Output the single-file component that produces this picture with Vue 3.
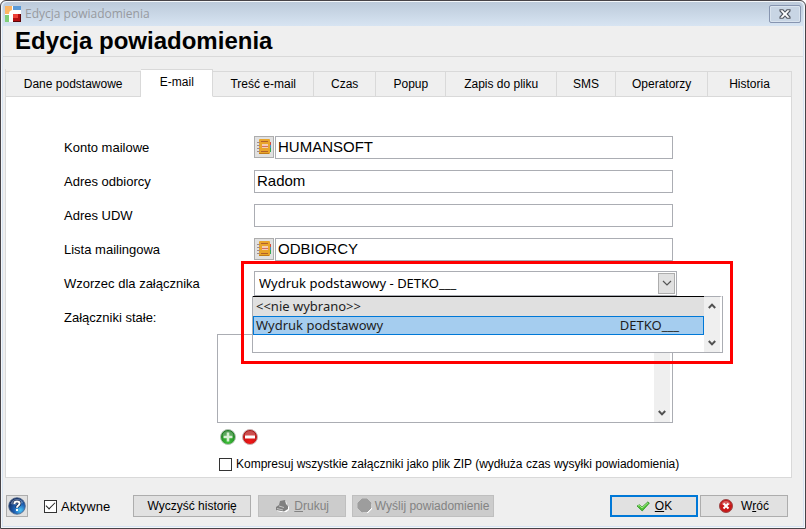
<script setup>
import { ref } from "vue";

const tabs = [
  { name: "Dane podstawowe", size: 136 },
  { name: "E-mail", size: 72 },
  { name: "Treść e-mail", size: 101 },
  { name: "Czas", size: 62 },
  { name: "Popup", size: 70 },
  { name: "Zapis do pliku", size: 111 },
  { name: "SMS", size: 59 },
  { name: "Operatorzy", size: 92 },
  { name: "Historia", size: 84 },
];
const activeTab = ref("E-mail");

const account = ref("HUMANSOFT");
const recipient = ref("Radom");
const bcc = ref("");
const mailingList = ref("ODBIORCY");

const templates = [
  { name: "<<nie wybrano>>", code: "" },
  { name: "Wydruk podstawowy", code: "DETKO___" },
];
const template = ref("Wydruk podstawowy");
const attachments = ref("");
const zip = ref(false);
const active = ref(true);

const optionText = (item) => (item.code ? `${item.name} - ${item.code}` : item.name);
</script>

<template>
  <div class="window">
    <div class="titlebar">
      <svg class="logo" width="16" height="16" viewBox="0 0 16 16">
        <rect width="16" height="16" fill="#fff" />
        <rect width="7" height="8" fill="#fdb562" />
        <rect x="8" width="8" height="4" fill="#5b9bd8" />
        <rect y="9" width="7" height="7" fill="#7fcf78" />
        <path d="M4 16V8Q4 4 8 4H16V16Z" fill="#fff" />
        <rect x="8" y="8" width="8" height="8" fill="#b30f12" />
        <rect x="8" y="8" width="5" height="4" fill="#ee4038" />
        <path d="M15 8H16V16H8V15H15Z" fill="#5c0508" />
      </svg>
      <span class="caption">Edycja powiadomienia</span>
      <button class="close" aria-label="Zamknij">
        <svg width="12" height="10" viewBox="0 0 12 10">
          <path d="M1 .8H4L6 3L8 .8H11V2L8.2 5L11 8V9.2H8L6 7L4 9.2H1V8L3.8 5L1 2Z" fill="#fff" stroke="#50545e" stroke-width="1.1" />
        </svg>
      </button>
    </div>

    <div class="body">
      <h1 class="heading">Edycja powiadomienia</h1>

      <div class="tabs" role="tablist">
        <button
          v-for="tab in tabs"
          :key="tab.name"
          class="tab"
          :class="{ active: tab.name === activeTab }"
          :style="{ flexGrow: tab.size }"
          role="tab"
          @click="activeTab = tab.name"
        >
          {{ tab.name }}
        </button>
      </div>

      <div class="panel">
        <div class="form">
          <div class="row">
            <label for="account">Konto mailowe</label>
            <div class="field">
              <button class="book" aria-label="Wybierz konto">
                <svg width="16" height="17" viewBox="0 0 16 17">
                  <path d="M13 4H15V7H13Z" fill="#d84b3a" />
                  <path d="M13 7H15V10H13Z" fill="#3f8fc4" />
                  <path d="M13 10H15V14H13Z" fill="#34a853" />
                  <rect x="3" y="1" width="11" height="15" rx="1" fill="#e9a52b" />
                  <path d="M3 15.5H13" stroke="#c17c17" />
                  <path d="M1 4.5H4M1 7.5H4M1 10.5H4M1 13.5H4" stroke="#a58c86" />
                  <path d="M5 3.5H12M5 13.5H12" stroke="#b2602a" />
                  <rect x="6" y="6" width="6" height="4" fill="#f5cdb4" />
                  <path d="M6 8.5H12" stroke="#d3705c" />
                </svg>
              </button>
              <input id="account" v-model="account" type="text" class="text" />
            </div>
          </div>
          <div class="row">
            <label for="recipient">Adres odbiorcy</label>
            <div class="field">
              <input id="recipient" v-model="recipient" type="text" class="text" />
            </div>
          </div>
          <div class="row">
            <label for="bcc">Adres UDW</label>
            <div class="field">
              <input id="bcc" v-model="bcc" type="text" class="text" />
            </div>
          </div>
          <div class="row">
            <label for="list">Lista mailingowa</label>
            <div class="field">
              <button class="book" aria-label="Wybierz listę">
                <svg width="16" height="17" viewBox="0 0 16 17">
                  <path d="M13 4H15V7H13Z" fill="#d84b3a" />
                  <path d="M13 7H15V10H13Z" fill="#3f8fc4" />
                  <path d="M13 10H15V14H13Z" fill="#34a853" />
                  <rect x="3" y="1" width="11" height="15" rx="1" fill="#e9a52b" />
                  <path d="M3 15.5H13" stroke="#c17c17" />
                  <path d="M1 4.5H4M1 7.5H4M1 10.5H4M1 13.5H4" stroke="#a58c86" />
                  <path d="M5 3.5H12M5 13.5H12" stroke="#b2602a" />
                  <rect x="6" y="6" width="6" height="4" fill="#f5cdb4" />
                  <path d="M6 8.5H12" stroke="#d3705c" />
                </svg>
              </button>
              <input id="list" v-model="mailingList" type="text" class="text" />
            </div>
          </div>
          <div class="row">
            <label for="template">Wzorzec dla załącznika</label>
            <div class="field combo">
              <select id="template" v-model="template" class="select">
                <option v-for="item in templates" :key="item.name" :value="item.name">
                  {{ optionText(item) }}
                </option>
              </select>
              <span class="arrow">
                <svg width="10" height="6" viewBox="0 0 10 6">
                  <path d="M1 1L5 5L9 1" fill="none" stroke="#555" stroke-width="1.2" />
                </svg>
              </span>
              <div class="popup">
                <ul class="options" role="listbox" aria-label="Wzorce">
                  <li
                    v-for="item in templates"
                    :key="item.name"
                    class="option"
                    :class="{ selected: item.name === template }"
                    role="option"
                    @click="template = item.name"
                  >
                    <span>{{ item.name }}</span>
                    <span v-if="item.code" class="code">{{ item.code }}</span>
                  </li>
                </ul>
                <div class="scroll">
                  <svg width="8" height="6" viewBox="0 0 8 6">
                    <path d="M.8 5L4 1.6L7.2 5" fill="none" stroke="#505050" stroke-width="2" />
                  </svg>
                  <svg width="8" height="6" viewBox="0 0 8 6">
                    <path d="M.8 1L4 4.4L7.2 1" fill="none" stroke="#505050" stroke-width="2" />
                  </svg>
                </div>
              </div>
              <div class="marker"></div>
            </div>
          </div>
          <div class="row">
            <label for="attachments">Załączniki stałe:</label>
          </div>
        </div>

        <div class="attachments">
          <div class="files">
            <textarea id="attachments" v-model="attachments"></textarea>
            <div class="scroll files-scroll">
              <svg width="8" height="6" viewBox="0 0 8 6">
                <path d="M.8 5L4 1.6L7.2 5" fill="none" stroke="#505050" stroke-width="2" />
              </svg>
              <svg width="8" height="6" viewBox="0 0 8 6">
                <path d="M.8 1L4 4.4L7.2 1" fill="none" stroke="#505050" stroke-width="2" />
              </svg>
            </div>
          </div>
          <div class="actions">
            <button class="round" aria-label="Dodaj">
              <svg width="16" height="16" viewBox="0 0 16 16">
                <defs>
                  <radialGradient id="green" cx=".5" cy=".8" r=".8">
                    <stop offset="0" stop-color="#3fc43a" />
                    <stop offset="1" stop-color="#17701c" />
                  </radialGradient>
                </defs>
                <circle cx="8" cy="8" r="7.5" fill="url(#green)" stroke="#b5c4b5" />
                <path d="M2.5 6.5Q3 2 8 2T13.5 6.5Q8 8 2.5 6.5Z" fill="#fff" opacity=".25" />
                <path d="M8 3.5V12.5M3.5 8H12.5" stroke="#d9efd5" stroke-width="2.6" />
              </svg>
            </button>
            <button class="round" aria-label="Usuń">
              <svg width="16" height="16" viewBox="0 0 16 16">
                <defs>
                  <radialGradient id="red" cx=".5" cy=".8" r=".8">
                    <stop offset="0" stop-color="#f41616" />
                    <stop offset="1" stop-color="#a31616" />
                  </radialGradient>
                </defs>
                <circle cx="8" cy="8" r="7.5" fill="url(#red)" stroke="#c9b4b4" />
                <path d="M2.5 6.5Q3 2 8 2T13.5 6.5Q8 8 2.5 6.5Z" fill="#fff" opacity=".25" />
                <path d="M3 8H13" stroke="#fff" stroke-width="3" />
              </svg>
            </button>
          </div>
          <label class="check zip">
            <input v-model="zip" type="checkbox" />
            <span>Kompresuj wszystkie załączniki jako plik ZIP (wydłuża czas wysyłki powiadomienia)</span>
          </label>
        </div>
      </div>

      <div class="footer">
        <button class="help" aria-label="Pomoc">
          <svg width="18" height="18" viewBox="0 0 18 18">
            <defs>
              <radialGradient id="blue" cx=".7" cy=".75" r=".8">
                <stop offset="0" stop-color="#4cc6f8" />
                <stop offset=".45" stop-color="#1f62b5" />
                <stop offset="1" stop-color="#0f2557" />
              </radialGradient>
            </defs>
            <circle cx="9" cy="9" r="8.3" fill="url(#blue)" stroke="#4d6488" stroke-width=".8" />
            <path d="M2.5 7Q4 2 9 2T15 6Q9 9 2.5 7Z" fill="#fff" opacity=".3" />
            <path d="M6.4 7Q6.4 4.6 9 4.6T11.6 6.6Q11.6 7.8 10.2 8.6Q9 9.2 9 10.8" fill="none" stroke="#12234a" stroke-width="3.4" />
            <path d="M6.4 7Q6.4 4.6 9 4.6T11.6 6.6Q11.6 7.8 10.2 8.6Q9 9.2 9 10.8" fill="none" stroke="#fff" stroke-width="2" />
            <rect x="8" y="12" width="2" height="2" fill="#fff" />
          </svg>
        </button>
        <label class="check">
          <input v-model="active" type="checkbox" />
          <span>Aktywne</span>
        </label>
        <button class="btn history">Wyczyść historię</button>
        <button class="btn print" disabled>
          <svg width="14" height="12" viewBox="0 0 14 12">
            <path d="M5 1L10 0L11 4L13 6V9L9 12L1 10V7L4 5Z" fill="#fff" transform="translate(1 1)" />
            <path d="M5 1L10 0L11 4L13 6V9L9 11.5L1 10V7L4 5Z" fill="#7f7f7f" />
            <path d="M4 6L9 7.5M2 8.5L8 10" stroke="#c4c4c4" />
          </svg>
          <span><u>D</u>rukuj</span>
        </button>
        <button class="btn send" disabled>
          <svg width="16" height="16" viewBox="0 0 16 16">
            <path d="M6 2H11L15 6V11L11 15H6L2 11Z" fill="#fff" />
            <path d="M5 1H10L14 5V10L10 14H5L1 10V5Z" fill="#9d9d9d" stroke="#9d9d9d" />
          </svg>
          <span>Wyślij powiadomienie</span>
        </button>
        <button class="btn main ok">
          <svg width="14" height="11" viewBox="0 0 14 11">
            <path d="M1 5L3.5 3.8L6 6.2L12 .8L13.3 2.2L6.2 10Z" fill="#4cc234" stroke="#2f8f2a" stroke-width=".8" />
            <path d="M2 5L3.5 4.5L6 7L12 1.8" fill="none" stroke="#a5eb86" />
          </svg>
          <span><u>O</u>K</span>
        </button>
        <button class="btn main">
          <svg width="14" height="14" viewBox="0 0 14 14">
            <circle cx="7" cy="7" r="6.5" fill="#c81818" stroke="#9b4a4a" />
            <path d="M2.5 5.5Q3 2 7 2T11.5 5.5Q7 7 2.5 5.5Z" fill="#fff" opacity=".3" />
            <path d="M4.5 4.5L9.5 9.5M9.5 4.5L4.5 9.5" stroke="#fff" stroke-width="2" />
          </svg>
          <span>W<u>r</u>óć</span>
        </button>
      </div>
    </div>
  </div>
</template>

<style>
body {
  margin: 0;
  background: #fff;
}
</style>

<style scoped>
.window {
  box-sizing: border-box;
  display: flex;
  flex-direction: column;
  min-height: 100vh;
  border: 1px solid #474347;
  border-radius: 6px 6px 0 0;
  padding: 1px 2px 2px;
  background: #d7e4f2;
  box-shadow: inset 0 0 0 1px #f4f7fa;
  font-family: "Liberation Sans", Arial, sans-serif;
  font-size: 13px;
  color: #000;
}

button {
  font-family: inherit;
  color: #000;
}

svg {
  display: block;
  flex: none;
}

.titlebar {
  display: flex;
  align-items: center;
  gap: 4px;
  height: 24px;
  padding: 0 2px;
  background: linear-gradient(#bccada, #d7e4f2);
  border-radius: 5px 5px 0 0;
}

.caption {
  flex: 1;
  font-family: "Open Sans", sans-serif;
  font-size: 12px;
  line-height: 16px;
  color: #979a9f;
}

.close {
  display: flex;
  align-items: center;
  justify-content: center;
  width: 32px;
  height: 18px;
  padding: 0;
  border: 1px solid #8795b0;
  border-radius: 2px;
  background: #c8d5e4;
  box-shadow: inset 0 0 0 1px #d9e3ee;
}

.body {
  flex: 1;
  display: flex;
  flex-direction: column;
  background: #efefef;
}

.heading {
  margin: 0;
  padding: 0 12px;
  height: 30px;
  border-bottom: 1px solid #d9d9d9;
  font-size: 24px;
  line-height: 30px;
}

.tabs {
  display: flex;
  align-items: flex-end;
  margin: 12px 11px 0 2px;
  border-left: 1px solid #d9d9d9;
}

.tab {
  box-sizing: border-box;
  flex: 1 1 0;
  height: 26px;
  padding: 0;
  border: 1px solid #d9d9d9;
  border-left: none;
  background: #efefef;
  font-size: 12px;
  white-space: nowrap;
}

.tab.active {
  height: 28px;
  padding-bottom: 2px;
  border-bottom-color: #fff;
  background: #fff;
}

.panel {
  flex: 1;
  margin: 0 11px 0 2px;
  padding: 33px 118px 0 58px;
  border: 1px solid #d9d9d9;
  border-top: none;
  background: #fff;
}

.row {
  display: grid;
  grid-template-columns: 190px 1fr;
  align-items: center;
  height: 34px;
}

.field {
  display: flex;
  gap: 1px;
}

.book {
  box-sizing: border-box;
  display: flex;
  align-items: center;
  justify-content: center;
  width: 20px;
  height: 22px;
  padding: 0;
  border: 1px solid #adadad;
  background: #e1e1e1;
}

.text {
  box-sizing: border-box;
  flex: 1;
  min-width: 0;
  height: 23px;
  padding: 0 2px 1px;
  border: 1px solid #abadb3;
  background: #fff;
  font-family: inherit;
  font-size: 15px;
  color: #000;
}

.combo {
  position: relative;
  margin-right: -4px;
}

.select {
  appearance: none;
  box-sizing: border-box;
  width: 100%;
  height: 25px;
  padding: 0 24px 0 4px;
  border: 1px solid #abadb3;
  border-radius: 0;
  background: #fff;
  font-family: "Noto Sans", sans-serif;
  font-size: 13px;
  color: #000;
}

.arrow {
  position: absolute;
  top: 2px;
  right: 2px;
  display: flex;
  align-items: center;
  justify-content: center;
  box-sizing: border-box;
  width: 17px;
  height: 21px;
  border: 1px solid #adadad;
  background: #e1e1e1;
  pointer-events: none;
}

.popup {
  position: absolute;
  z-index: 1;
  top: 25px;
  left: -2px;
  right: -46px;
  display: flex;
  box-sizing: border-box;
  height: 57px;
  border: 1px solid #abadb3;
  border-top: none;
  background: #fff;
}

.options {
  flex: 1;
  margin: 0;
  padding: 0;
  border-top: 1px solid #000;
  list-style: none;
  font-family: "Noto Sans", sans-serif;
  font-size: 13px;
  color: #1e1e1e;
}

.option {
  display: flex;
  justify-content: space-between;
  box-sizing: border-box;
  height: 19px;
  padding: 0 24px 0 2px;
  border: 1px solid transparent;
  background: #e0e0e0;
  line-height: 17px;
}

.option.selected {
  border-color: #0078d7;
  background: #a5cdef;
}

.scroll {
  box-sizing: border-box;
  display: flex;
  flex-direction: column;
  align-items: center;
  justify-content: space-between;
  width: 18px;
  padding: 6px 0;
  border-top: 1px solid #abadb3;
  border-right: 2px solid #fff;
  background: #efefef;
}

.marker {
  position: absolute;
  z-index: 2;
  top: -10px;
  left: -13px;
  right: -56px;
  height: 97px;
  border: 3px solid #f00;
  pointer-events: none;
}

.attachments {
  padding-left: 153px;
}

.files {
  display: flex;
  box-sizing: border-box;
  height: 89px;
  border: 1px solid #abadb3;
}

.files textarea {
  flex: 1;
  min-width: 0;
  padding: 2px;
  border: none;
  resize: none;
  font: inherit;
}

.files-scroll {
  border-top: none;
}

.actions {
  display: flex;
  gap: 6px;
  padding: 6px 3px;
}

.round {
  padding: 0;
  border: none;
  background: none;
}

.check {
  display: flex;
  align-items: center;
  gap: 4px;
  white-space: nowrap;
}

.check input {
  appearance: none;
  display: grid;
  place-content: center;
  flex: none;
  box-sizing: border-box;
  width: 13px;
  height: 13px;
  margin: 0;
  border: 1px solid #333;
  background: #fff;
}

.check input:checked::after {
  content: "";
  width: 8px;
  height: 4px;
  margin-bottom: 3px;
  border-left: 1px solid #222;
  border-bottom: 1px solid #222;
  transform: rotate(-45deg);
}

.zip {
  padding: 6px 2px 4px;
  font-size: 12px;
}

.footer {
  display: flex;
  align-items: center;
  padding: 17px 15px 9px 3px;
}

.help {
  display: flex;
  align-items: center;
  justify-content: center;
  box-sizing: border-box;
  width: 22px;
  height: 22px;
  margin-right: 16px;
  padding: 0;
  border: 1px solid #adadad;
  background: #e1e1e1;
}

.btn {
  display: flex;
  align-items: center;
  justify-content: center;
  gap: 5px;
  box-sizing: border-box;
  height: 22px;
  padding: 0;
  border: 1px solid #adadad;
  background: #e1e1e1;
  font-size: 12px;
  white-space: nowrap;
}

.btn:disabled {
  border-color: #bfbfbf;
  background: #ccc;
  color: #838383;
}

.history {
  width: 118px;
  margin-left: 23px;
}

.print {
  width: 88px;
  margin-left: 7px;
}

.send {
  gap: 2px;
  width: 142px;
  margin-left: 6px;
}

.main {
  gap: 8px;
  width: 88px;
}

.ok {
  margin-left: auto;
  margin-right: 2px;
  border: 2px solid #0078d7;
  gap: 5px;
}
</style>
